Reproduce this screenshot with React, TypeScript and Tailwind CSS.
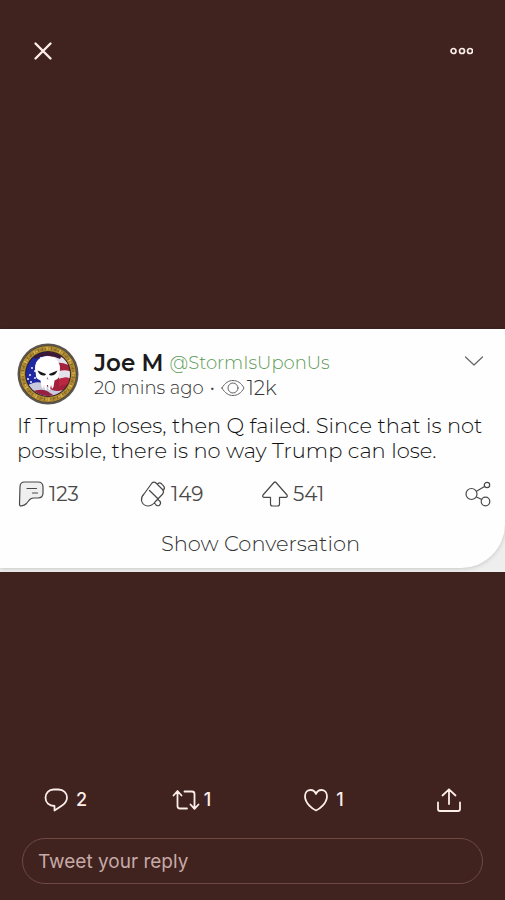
import type { ReactNode } from "react";

const sealTicks = Array.from({ length: 36 }, (_, i) => i * 10);

const stars = [
  [15, 25], [20, 20], [13, 32], [18, 28], [14, 39], [11, 36], [24, 15], [18, 35],
];

function Avatar() {
  return (
    <svg viewBox="0 0 62 62" className="h-[62px] w-[62px] shrink-0" role="img" aria-label="Joe M">
      <defs>
        <clipPath id="flag">
          <circle cx="31" cy="31" r="22" />
        </clipPath>
      </defs>
      <circle cx="31" cy="31" r="30.5" fill="#5a5650" />
      <circle cx="31" cy="31" r="28.5" fill="#4a3c1e" />
      <circle cx="31" cy="31" r="25.5" fill="none" stroke="#b18c35" strokeWidth="5" />
      {sealTicks.map((deg) => (
        <path
          key={deg}
          d="M30 4v3M32 6h1.5"
          stroke={deg % 30 === 0 ? "#e0bd50" : "#856726"}
          strokeWidth="1.2"
          transform={`rotate(${deg} 31 31)`}
        />
      ))}
      <circle cx="31" cy="31" r="22.5" fill="#171533" />
      <g clipPath="url(#flag)">
        <path d="M8 8h24v38H8z" fill="#2029a0" />
        <path d="M30 8h26v46H30z" fill="#a4213c" />
        <path d="M31 15q10-4 23 3v5q-12-6-23-2zM42 28q7-2 13 1v7q-7-3-13 0z" fill="#e4e1ec" />
        <path d="M42 36q7-3 13 0v7q-7-4-13 1z" fill="#b92742" />
        <path d="M10 43q12-8 21 1t24-2l-6 12H18z" fill="#c9cbdc" />
        <path d="M14 49q12-5 19 1t16-1l-8 8H20z" fill="#93213f" />
        <path d="M16 12q14-8 29 0l-2 4q-13-7-25 0z" fill="#3a1837" />
        {stars.map(([x, y]) => (
          <circle key={`${x}-${y}`} cx={x} cy={y} r="1.1" fill="#dfe3ff" />
        ))}
      </g>
      <path
        d="M30.500 13C23 13 18 18.500 18 25 18 28 19 30 19 33 19 36 22 36.500 23.500 37.500L24.500 44 26 46 27 42 28 47 29.500 47 30 42 31 42 31.500 47 33 47 34 42 35 46 36.500 44 37.500 37.500C39 36.500 42 36 42 33 42 30 43 28 43 25 43 18.500 38 13 30.500 13z"
        fill="#fff"
      />
      <path d="M20.500 27.500L29 31C28.500 33.500 22.500 33.500 20.500 27.500zM40.500 27.500L32 31C32.500 33.500 38.500 33.500 40.500 27.500z" fill="#191719" />
      <path d="M30.500 34L29.500 36.500 30.500 36 31.500 36.500z" fill="#777" />
    </svg>
  );
}

type IconProps = { className: string; viewBox: string; children: ReactNode };

function Icon({ className, viewBox, children }: IconProps) {
  return (
    <svg
      viewBox={viewBox}
      className={className}
      fill="none"
      stroke="currentColor"
      strokeLinecap="round"
      strokeLinejoin="round"
      aria-hidden="true"
    >
      {children}
    </svg>
  );
}

function PostCard() {
  return (
    <div className="bg-[#eeeeee] pb-1">
      <article className="rounded-br-[44px] bg-[#fefefe] px-[17px] pt-[14px] text-[#484848] shadow-[0_1px_4px_rgba(0,0,0,0.16)]">
        <div className="flex items-start">
          <Avatar />
          <div className="ml-[15px] flex-1 pt-1">
            <div className="flex items-center gap-[6px]">
              <span className="text-[23px] leading-8 font-semibold text-[#1b1b1b]">Joe M</span>
              <a href="#profile" className="text-lg leading-8 font-light text-[#5c9a54]">
                @StormIsUponUs
              </a>
            </div>
            <div className="flex items-center text-lg leading-[18px] font-light text-[#333]">
              <span>20 mins ago</span>
              <span className="mx-[6px]">•</span>
              <Icon viewBox="0 0 24 18" className="h-[18px] w-6 text-[#666]">
                <path d="M1 9C4 3.500 8 1.500 12 1.500s8 2 11 7.500c-3 5.500-7 7.500-11 7.500S4 14.500 1 9z" />
                <circle cx="12" cy="9" r="5" />
              </Icon>
              <span className="ml-[2px] text-xl leading-[18px]">12k</span>
            </div>
          </div>
          <button type="button" aria-label="Post options" className="mt-3 mr-1 text-[#666]">
            <Icon viewBox="0 0 20 12" className="h-3 w-5">
              <path d="M1.500 2l8.500 8 8.500-8" strokeWidth="1.200" />
            </Icon>
          </button>
        </div>

        <p className="mt-2 text-[21px] leading-[25px] font-light text-[#111]">
          If Trump loses, then Q failed. Since that is not possible, there is no way Trump can lose.
        </p>

        <div className="mt-[17px] flex items-center text-xl leading-[28px]">
          <button type="button" aria-label="Comments" className="flex w-[122px] items-center gap-1">
            <Icon viewBox="0 0 28 28" className="h-7 w-7">
              <path
                d="M7.500 2h13.500q5 0 5 5v6q0 5-5 5h-4.500q-3 0-5 3l-2 2.500q-2 2-5 2.300Q2.300 26 2.500 24L3 7q0-5 4.500-5z"
                fill="#efefef"
                strokeWidth="1.200"
              />
              <path d="M10 8.500h9.500M15.500 13h5" strokeWidth="1.200" />
            </Icon>
            123
          </button>
          <button type="button" aria-label="Echoes" className="flex w-[122px] items-center gap-1">
            <Icon viewBox="0 0 28 28" className="h-7 w-7">
              <path
                d="M13 3q2-2 4 0l6.500 6.500q2 2 .2 4.500L16 22q-3 4-7.500 4-5-.7-6-5.500-.3-4 2.500-6.500zM10.500 10.500l8.500 8.300M18.500 4q2-2 4-.2l2 2q1.700 2 .3 3.700M15.500 23l1.500 2q2 1.500 3.700 0t.2-3.800l-2-1.700"
                strokeWidth="1.200"
              />
            </Icon>
            149
          </button>
          <button type="button" aria-label="Upvotes" className="flex items-center gap-1">
            <Icon viewBox="0 0 28 28" className="h-7 w-7">
              <path
                d="M13 2.500q1-1 2 0L26 15q1 2-1 2.300h-6.500V24q0 2-2 2h-5q-2 0-2-2v-6.700H3q-2-.3-1-2.300z"
                strokeWidth="1.200"
              />
            </Icon>
            541
          </button>
          <button type="button" aria-label="Share post" className="-mr-1 ml-auto">
            <Icon viewBox="0 0 28 28" className="h-7 w-7">
              <circle cx="7.500" cy="14" r="5.500" strokeWidth="1.200" />
              <circle cx="23" cy="5" r="2.700" strokeWidth="1.200" />
              <circle cx="21.500" cy="21.500" r="4.300" strokeWidth="1.200" />
              <path d="M12.500 11.300l8-4.700M12.500 17l5.300 2.500" strokeWidth="1.200" />
            </Icon>
          </button>
        </div>

        <button
          type="button"
          className="mt-[22px] block w-full pb-[10px] pl-4 text-center text-[21px] leading-7 font-light text-[#333]"
        >
          Show Conversation
        </button>
      </article>
    </div>
  );
}

export default function App() {
  return (
    <main className="grid min-h-screen grid-rows-[1fr_auto_1fr] bg-[#40221f] font-['Montserrat','Inter',sans-serif] text-[#fceee9]">
      <header className="flex items-start justify-between px-8 pt-10">
        <button type="button" aria-label="Close">
          <Icon viewBox="0 0 22 22" className="h-[22px] w-[22px]">
            <path d="M3.500 3.500l15 15M18.500 3.500l-15 15" strokeWidth="2.400" />
          </Icon>
        </button>
        <button type="button" aria-label="More">
          <Icon viewBox="0 0 24 22" className="h-[22px] w-6">
            <circle cx="4.500" cy="11" r="2.500" strokeWidth="1.700" />
            <circle cx="13" cy="11" r="2.500" strokeWidth="1.700" />
            <circle cx="21" cy="11" r="2.500" strokeWidth="1.700" />
          </Icon>
        </button>
      </header>

      <PostCard />

      <footer className="self-end pb-4 font-['Inter',sans-serif]">
        <div className="flex items-center justify-between px-11 text-lg leading-6 font-medium">
          <button type="button" aria-label="Replies" className="flex items-center gap-2">
            <Icon viewBox="0 0 24 24" className="h-6 w-6">
              <path
                d="M9.500 1.500h5c5 0 8.500 3.500 8.500 8 0 4-2.500 6.500-6 8.800L10.500 22.500V18C5 18 1.500 14.500 1.500 9.700S5 1.500 9.500 1.500z"
                strokeWidth="1.800"
              />
            </Icon>
            2
          </button>
          <button type="button" aria-label="Retweets" className="flex w-12 items-center gap-1">
            <Icon viewBox="0 0 28 24" className="h-6 w-7">
              <path
                d="M1.500 7.500L5.500 3l4 4.500M5.500 3.500V18q0 2.500 2.500 2.500h7M12.500 3.500H20q2.500 0 2.500 2.500v14.500M18.500 16.500l4 4.300 4-4.300"
                strokeWidth="1.800"
              />
            </Icon>
            1
          </button>
          <button type="button" aria-label="Likes" className="flex w-12 items-center gap-2">
            <Icon viewBox="0 0 24 24" className="h-6 w-6">
              <path
                d="M12 22.500C9 21.500 1 15.500 1 8.300 1 4.500 3.500 2 6.700 2 9 2 11 3.500 12 6c1-2.500 3-4 5.300-4C20.500 2 23 4.500 23 8.300c0 7.200-8 13.200-11 14.200z"
                strokeWidth="1.800"
              />
            </Icon>
            1
          </button>
          <button type="button" aria-label="Share">
            <Icon viewBox="0 0 24 24" className="h-6 w-6">
              <path d="M1 14.500V21q0 2 2 2h18q2 0 2-2v-6.500M12 16V1.500M5.500 7.500L12 1.300l6.500 6.200" strokeWidth="1.800" />
            </Icon>
          </button>
        </div>
        <div className="mx-[22px] mt-[26px]">
          <input
            type="text"
            aria-label="Tweet your reply"
            placeholder="Tweet your reply"
            className="h-[46px] w-full rounded-full border border-[#704943] bg-transparent px-[15px] text-[19px] leading-6 text-[#fceee9] outline-none placeholder:text-[#c5aaa6]"
          />
        </div>
      </footer>
    </main>
  );
}
